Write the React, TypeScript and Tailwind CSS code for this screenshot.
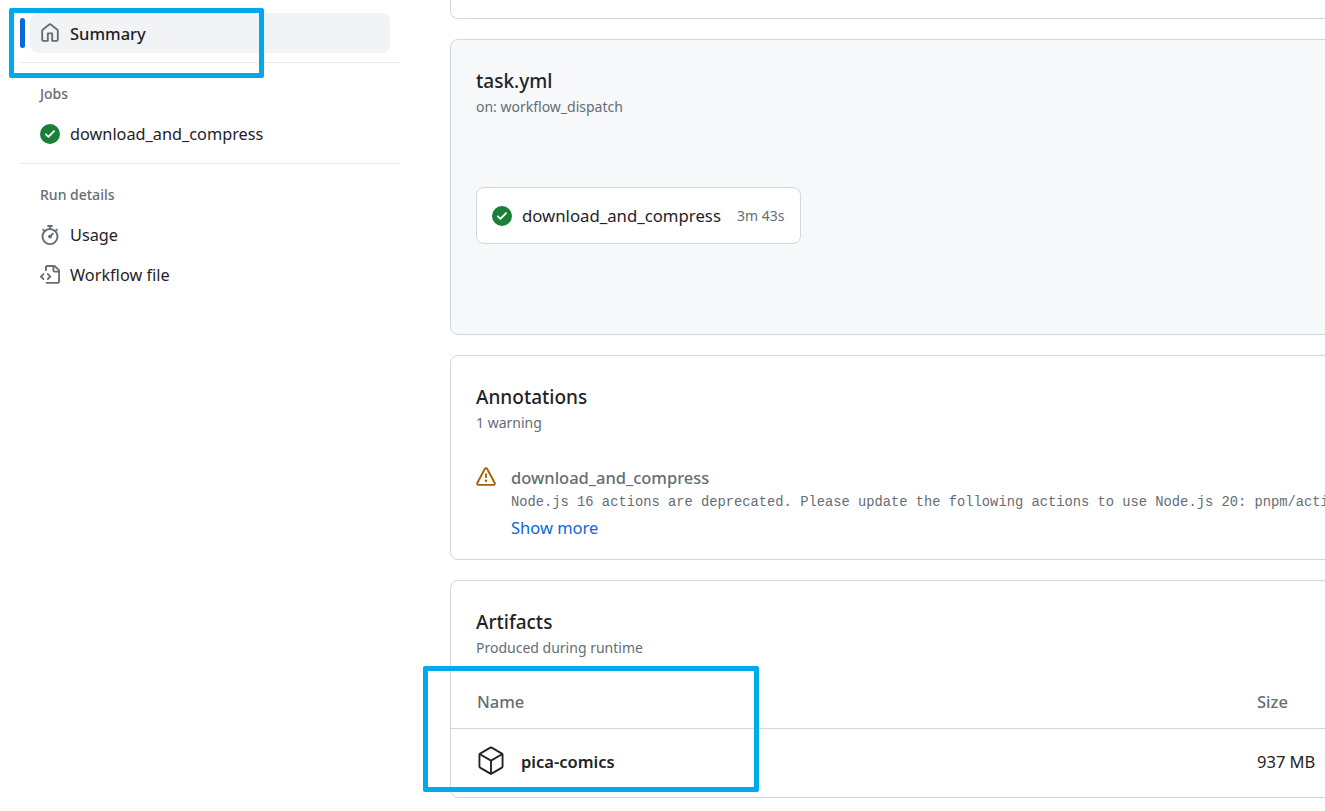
import React from 'react';

const paths = { home: 'M6.906.664a1.749 1.749 0 0 1 2.187 0l5.25 4.2c.415.332.657.835.657 1.367v7.019A1.75 1.75 0 0 1 13.25 15h-3.5a.75.75 0 0 1-.75-.75V9H7v5.25a.75.75 0 0 1-.75.75h-3.5A1.75 1.75 0 0 1 1 13.25V6.23c0-.531.242-1.034.657-1.366l5.25-4.2Zm1.25 1.171a.25.25 0 0 0-.312 0l-5.25 4.2a.25.25 0 0 0-.094.196v7.019c0 .138.112.25.25.25H5.5V8.25a.75.75 0 0 1 .75-.75h3.5a.75.75 0 0 1 .75.75v5.25h2.75a.25.25 0 0 0 .25-.25V6.23a.25.25 0 0 0-.094-.195Z',
  check: 'M8 16A8 8 0 1 1 8 0a8 8 0 0 1 0 16Zm3.78-9.72a.751.751 0 0 0-.018-1.042.751.751 0 0 0-1.042-.018L6.75 9.19 5.28 7.72a.751.751 0 0 0-1.042.018.751.751 0 0 0-.018 1.042l2 2a.75.75 0 0 0 1.06 0Z',
  stopwatch: 'M5.75.75A.75.75 0 0 1 6.5 0h3a.75.75 0 0 1 0 1.5h-.75v1l-.001.041a6.724 6.724 0 0 1 3.464 1.435l.007-.006.75-.75a.75.75 0 1 1 1.06 1.06l-.75.75-.006.007a6.75 6.75 0 1 1-10.548 0L2.72 5.03l-.75-.75a.75.75 0 0 1 1.06-1.06l.75.75.007.006A6.72 6.72 0 0 1 7.25 2.541V1.5H6.5a.75.75 0 0 1-.75-.75ZM8 14.5a5.25 5.25 0 1 0-.001-10.501A5.25 5.25 0 0 0 8 14.5Zm.389-6.7 1.33-1.33a.75.75 0 1 1 1.061 1.06L9.45 8.861A1.503 1.503 0 0 1 8 10.75a1.499 1.499 0 1 1 .389-2.95Z',
  fileCode: 'M4 1.75C4 .784 4.784 0 5.75 0h5.586c.464 0 .909.184 1.237.513l2.914 2.914c.329.328.513.773.513 1.237v8.586A1.75 1.75 0 0 1 14.25 15h-9a.75.75 0 0 1 0-1.5h9a.25.25 0 0 0 .25-.25V6h-2.75A1.75 1.75 0 0 1 10 4.25V1.5H5.75a.25.25 0 0 0-.25.25v2.5a.75.75 0 0 1-1.5 0Zm1.72 4.97a.75.75 0 0 1 1.06 0l2 2a.75.75 0 0 1 0 1.06l-2 2a.749.749 0 0 1-1.275-.326.749.749 0 0 1 .215-.734l1.47-1.47-1.47-1.47a.75.75 0 0 1 0-1.06ZM3.28 7.78 1.81 9.25l1.47 1.47a.751.751 0 0 1-.018 1.042.751.751 0 0 1-1.042.018l-2-2a.75.75 0 0 1 0-1.06l2-2a.751.751 0 0 1 1.042.018.751.751 0 0 1 .018 1.042Zm8.22-6.218V4.25c0 .138.112.25.25.25h2.688l-.011-.013-2.914-2.914-.013-.011Z',
  pkg24: 'M12.876.64V.639l8.25 4.763c.541.313.875.89.875 1.515v9.525a1.75 1.75 0 0 1-.875 1.516l-8.25 4.762a1.748 1.748 0 0 1-1.75 0l-8.25-4.763a1.75 1.75 0 0 1-.875-1.515V6.917c0-.625.334-1.202.875-1.515L11.126.64a1.748 1.748 0 0 1 1.75 0Zm-1 1.298L4.251 6.34l7.75 4.474 7.75-4.474-7.625-4.402a.248.248 0 0 0-.25 0Zm.875 19.123 7.625-4.402a.25.25 0 0 0 .125-.216V7.639l-7.75 4.474ZM3.501 7.64v8.803c0 .09.048.172.125.216l7.625 4.402v-8.947Z',
  alert: 'M6.457 1.047c.659-1.234 2.427-1.234 3.086 0l6.082 11.378A1.75 1.75 0 0 1 14.082 15H1.918a1.75 1.75 0 0 1-1.543-2.575Zm1.763.707a.25.25 0 0 0-.44 0L1.698 13.132a.25.25 0 0 0 .22.368h12.164a.25.25 0 0 0 .22-.368Zm.53 3.996v2.5a.75.75 0 0 1-1.5 0v-2.5a.75.75 0 0 1 1.5 0ZM9 11a1 1 0 1 1-2 0 1 1 0 0 1 2 0Z' };

const Icon = ({ d, className, box = 16 }: { d: string; className: string; box?: number }) => (
  <svg viewBox={`0 0 ${box} ${box}`} fill="currentColor" className={className}>
    <path d={d} />
  </svg>
);

const NavItem = ({ d, label, iconClass }: { d: string; label: string; iconClass: string }) => (
  <div className="flex items-center h-10 ml-5 gap-[10px] text-[16.3px] text-[#1f2328]">
    <Icon d={d} className={`w-5 h-5 shrink-0 ${iconClass}`} />
    <span>{label}</span>
  </div>
);

const Heading = ({ title, sub }: { title: string; sub: string }) => (
  <div>
    <div className="text-[19px] leading-[24px] font-medium text-[#1f2328]">{title}</div>
    <div className="text-[14px] leading-[20px] mt-[4px] text-[#656d76]">{sub}</div>
  </div>
);

export default function App() {
  return (
    <div className="relative flex h-[811px] w-[1325px] overflow-hidden bg-white font-['Noto_Sans',sans-serif]">
      {/* sidebar */}
      <aside className="w-[380px] shrink-0 ml-5">
        <div className="pt-[13px] pb-[9px] border-b border-[#e8eaed]">
          <div className="flex items-center">
            <div className="w-[5px] h-[30px] rounded-full bg-[#0969da] mr-[5px]" />
            <div className="flex items-center gap-[10px] w-[360px] h-10 pl-[10px] rounded-lg bg-[#f2f3f5] text-[16.5px] font-medium text-[#1f2328]">
              <Icon d={paths.home} className="w-5 h-5 text-[#656d76]" />
              <span className="pt-[2px]">Summary</span>
            </div>
          </div>
        </div>
        <div className="pt-[20px] pb-[9px] border-b border-[#e8eaed]">
          <div className="ml-5 h-5 flex items-center text-[14px] font-medium text-[#656d76] mb-[11px]">Jobs</div>
          <NavItem d={paths.check} label="download_and_compress" iconClass="text-[#1a7f37]" />
        </div>
        <div className="pt-[20px]">
          <div className="ml-5 h-5 flex items-center text-[14px] font-medium text-[#656d76] mb-[11px]">Run details</div>
          <NavItem d={paths.stopwatch} label="Usage" iconClass="text-[#656d76]" />
          <NavItem d={paths.fileCode} label="Workflow file" iconClass="text-[#656d76]" />
        </div>
      </aside>

      {/* main */}
      <main className="ml-[50px] w-[900px] shrink-0 flex flex-col gap-5">
        <div className="h-[19px] shrink-0 rounded-b-lg border border-t-0 border-[#d0d7de]" />

        <section className="h-[296px] shrink-0 rounded-lg border border-[#d0d7de] bg-[#f6f8fa] pt-[29px] px-[25px]">
          <Heading title="task.yml" sub="on: workflow_dispatch" />
          <div className="mt-[70px] w-[325px] h-[57px] rounded-lg border border-[#d0d7de] bg-white flex items-center pl-[15px]">
            <Icon d={paths.check} className="w-5 h-5 text-[#1a7f37] shrink-0" />
            <span className="ml-[10px] text-[16.75px] text-[#1f2328]">download_and_compress</span>
            <span className="ml-4 text-[14px] text-[#656d76]">3m 43s</span>
          </div>
        </section>

        <section className="h-[205px] shrink-0 rounded-lg border border-[#d0d7de] pt-[29px] px-[25px]">
          <Heading title="Annotations" sub="1 warning" />
          <div className="flex mt-[32px]">
            <Icon d={paths.alert} className="w-5 h-5 mt-[2px] text-[#9a6700] shrink-0" />
            <div className="ml-[15px] whitespace-nowrap">
              <div className="text-[16.5px] leading-[25px] font-medium text-[#656d76]">download_and_compress</div>
              <div className="text-[13.77px] leading-[20px] mt-[3px] font-['Liberation_Mono',monospace] text-[#656d76]">
                Node.js 16 actions are deprecated. Please update the following actions to use Node.js 20: pnpm/action-setup@v2
              </div>
              <div className="text-[16.5px] leading-[25px] mt-[2px] text-[#0969da]">Show more</div>
            </div>
          </div>
        </section>

        <section className="h-[218px] shrink-0 rounded-lg border border-[#d0d7de]">
          <div className="pt-[29px] px-[25px]">
            <Heading title="Artifacts" sub="Produced during runtime" />
          </div>
          <div className="flex items-center h-[54px] mt-[17px] pt-px pl-[26px] border-b border-[#d0d7de] text-[16.5px] font-medium text-[#656d76]">
            <span className="w-[780px]">Name</span>
            <span>Size</span>
          </div>
          <div className="flex items-center h-[64px] pl-[25px] text-[16.5px] text-[#1f2328]">
            <Icon d={paths.pkg24} box={24} className="w-[30px] h-[30px] shrink-0 text-[#1f2328]" />
            <span className="ml-[15px] w-[736px] pt-[2px] font-semibold">pica-comics</span>
            <span className="pt-[2px]">937 MB</span>
          </div>
        </section>
      </main>

      {/* marker boxes drawn over the screenshot */}
      <div className="absolute left-[9px] top-[8px] w-[255px] h-[70px] rounded-[2px] border-[5px] border-[#00a8ec]" />
      <div className="absolute left-[423px] top-[666px] w-[336px] h-[126px] rounded-[2px] border-[5px] border-[#00a8ec]" />
    </div>
  );
}
